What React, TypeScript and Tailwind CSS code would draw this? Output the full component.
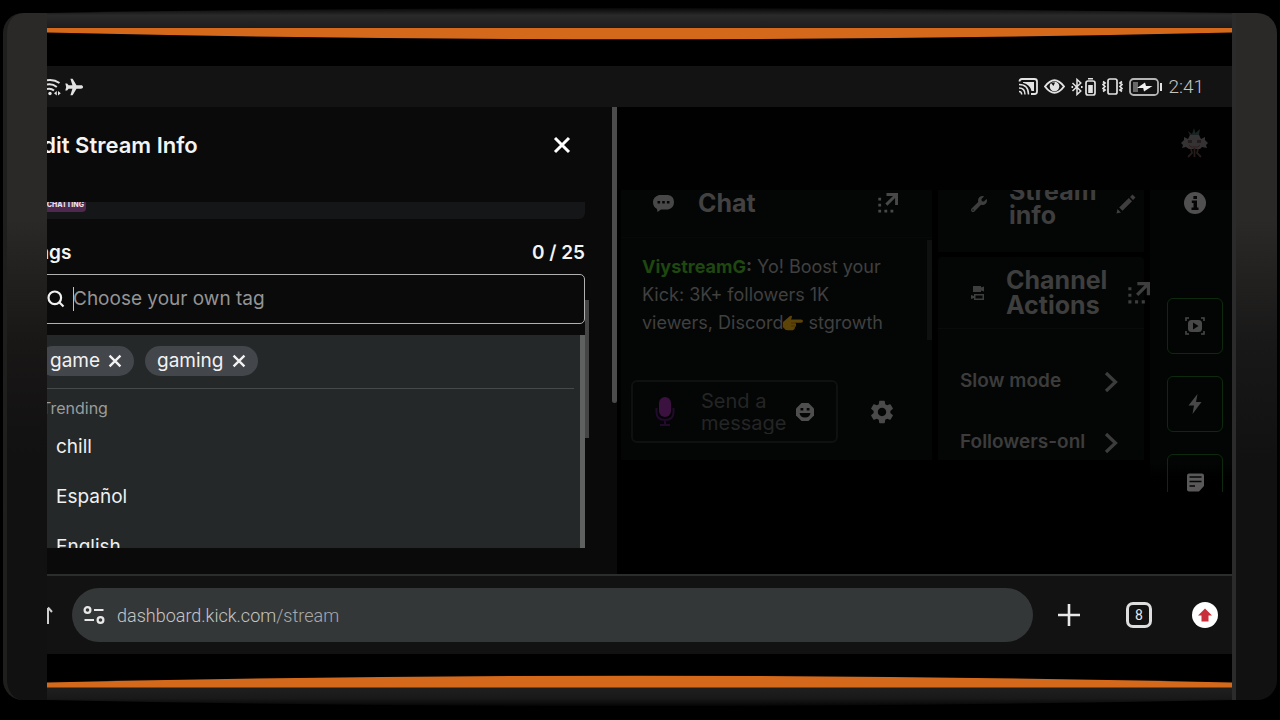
import React from "react";
import { FaWrench } from "react-icons/fa";
import { MdSettings } from "react-icons/md";

type IconProps = { className?: string };

function CloseIcon({ className }: IconProps) {
  return (
    <svg viewBox="0 0 18 18" className={className} aria-hidden="true">
      <path d="M2 2 16 16M16 2 2 16" fill="none" stroke="currentColor" strokeWidth="3" />
    </svg>
  );
}

function PopoutIcon({ className }: IconProps) {
  return (
    <svg viewBox="0 0 20 20" className={className} aria-hidden="true" fill="currentColor">
      <path d="M8.500 0H20v12h-2.900V5L9.400 12.700 7.300 10.600 15 2.900H8.500z" />
      <path d="M.3 4.700h2.800v2.800H.3zM.3 10.700h2.800v2.800H.3zM.3 16.700h2.800v2.800H.3zM6.400 16.700h2.800v2.800H6.400zM12.500 16.700h2.800v2.800h-2.800z" />
    </svg>
  );
}

function ChevronIcon() {
  return (
    <svg viewBox="0 0 14 22" className="h-[22px] w-[14px] shrink-0" aria-hidden="true">
      <path d="M2 2l9.500 9L2 20" fill="none" stroke="currentColor" strokeWidth="3.200" />
    </svg>
  );
}

function TopBezel() {
  return (
    <svg viewBox="0 0 1185 66" preserveAspectRatio="none" className="block h-[66px] w-full shrink-0" aria-hidden="true">
      <defs>
        <linearGradient id="topEdge" x1="0" y1="0" x2="0" y2="1">
          <stop offset="0" stopColor="#080808" />
          <stop offset="0.35" stopColor="#292a29" />
          <stop offset="1" stopColor="#1b1c1b" />
        </linearGradient>
      </defs>
      <path d="M0 13Q592 3 1185 13V29H0z" fill="url(#topEdge)" />
      <path d="M0 28H1185V32.500Q592 46 0 32.500z" fill="#d4691b" />
    </svg>
  );
}

function BottomBezel() {
  return (
    <svg viewBox="0 0 1185 66" preserveAspectRatio="none" className="block h-[66px] w-full shrink-0" aria-hidden="true">
      <defs>
        <linearGradient id="bottomEdge" x1="0" y1="0" x2="0" y2="1">
          <stop offset="0" stopColor="#201f20" />
          <stop offset="0.6" stopColor="#191919" />
          <stop offset="1" stopColor="#050505" />
        </linearGradient>
      </defs>
      <path d="M0 33H1185V46Q592 58 0 46z" fill="url(#bottomEdge)" />
      <path d="M0 28.500Q592 15 1185 28.500V33.500H0z" fill="#d4691b" />
    </svg>
  );
}

function StatusBar() {
  return (
    <div className="flex h-[41px] shrink-0 items-center justify-between bg-[#131313] pr-7 text-[#e2e2e2]">
      <div className="flex items-center gap-1">
        <svg viewBox="0 0 14 18" className="h-[18px] w-[14px]" aria-hidden="true" fill="none" stroke="currentColor" strokeWidth="2">
          <path d="M0 2.200Q7 1 12.500 5M0 6.600Q5.500 5.600 9.800 9M0 11Q4 10 7 12.500" />
          <circle cx="3" cy="15.500" r="1.700" fill="currentColor" stroke="none" />
          <path d="M9.800 13 7 15.300l2.800 2.300zM11 13l2.800 2.300-2.800 2.300z" fill="currentColor" stroke="none" />
        </svg>
        <svg viewBox="0 0 18 18" className="h-[18px] w-[18px]" aria-hidden="true" fill="currentColor">
          <path d="M18 9c0-1.100-.8-1.700-2-1.700h-4.500L7.600.7H5.400l2 6.600H3.600L2.100 5.400H.3L1.200 9 .3 12.600h1.800l1.500-1.900h3.800l-2 6.600h2.200l3.900-6.600H16c1.200 0 2-.6 2-1.700z" />
        </svg>
      </div>
      <div className="flex items-center">
        <svg viewBox="0 0 20 17" className="mr-1.5 h-[17px] w-[20px]" aria-hidden="true" fill="none" stroke="currentColor" strokeWidth="1.800">
          <path d="M1.500 3.500Q1.500 1 4 1h12.500Q19 1 19 3.500v10q0 2.500-2.500 2.500H13" />
          <path d="M5 4h11v9h-2.500Q12 6.500 5 4.800z" fill="currentColor" stroke="none" />
          <path d="M1 6.500q9.500 0 9.500 10M1 10q6 0 6 6.500M1 13.400q2.700 0 2.700 3.100" strokeWidth="1.500" />
        </svg>
        <svg viewBox="0 0 21 15" className="mr-1.5 h-[15px] w-[21px]" aria-hidden="true">
          <path d="M1 7.500Q10.500-5 20 7.500 10.500 20 1 7.500z" fill="none" stroke="currentColor" strokeWidth="2" />
          <circle cx="10.500" cy="7.500" r="4.800" fill="currentColor" />
          <path d="M6.500 3.500h4.500L9.500 7z" fill="#131313" />
        </svg>
        <svg viewBox="0 0 12 18" className="mr-0.5 h-[18px] w-3" aria-hidden="true" fill="none" stroke="currentColor" strokeWidth="1.500">
          <path d="M1.500 5 9.800 13 6 16.500v-15L9.800 5 1.500 13" />
          <path d="M.5 9h1.600M10 9h1.600" strokeWidth="1.800" />
        </svg>
        <svg viewBox="0 0 11 18" className="mr-1.5 h-[18px] w-[11px]" aria-hidden="true">
          <rect x="1" y="3" width="9" height="14" rx="2" fill="none" stroke="currentColor" strokeWidth="1.700" />
          <path d="M3 0h5v1.600H3zM3.200 7h4.600v8H3.200z" fill="currentColor" />
        </svg>
        <svg viewBox="0 0 21 17" className="mr-1.5 h-[17px] w-[21px]" aria-hidden="true" fill="none" stroke="currentColor" strokeWidth="1.700">
          <rect x="6" y="1" width="9" height="15" rx="1.800" />
          <path d="M1 3.500 3 5 1 6.500 3 8.500 1 10.500 3 12 1 13.500M20 3.500 18 5l2 1.500-2 2 2 2-2 1.500 2 1.500" />
        </svg>
        <svg viewBox="0 0 33 18" className="mr-1.5 h-[18px] w-[33px]" aria-hidden="true">
          <rect x="1" y="1" width="28" height="16" rx="3.500" fill="none" stroke="#b4b4b4" strokeWidth="1.800" />
          <path d="M4 4h5v10H4z" fill="#686868" />
          <path d="M16 4.500 17 8h6.500l-8.500 5.500-.8-3.500H8z" fill="#f0f0f0" />
          <path d="M31 5h2v8h-2z" fill="currentColor" />
        </svg>
        <time className="font-['Roboto',sans-serif] text-[19px] leading-6 font-light text-[#c4c4c4]">2:41</time>
      </div>
    </div>
  );
}

function TagChip({ label }: { label: string }) {
  return (
    <span className="flex h-[30px] items-center gap-2 rounded-full bg-[#43464b] px-3 text-[19px] text-[#f2f2f2]">
      {label}
      <button type="button" aria-label={`Remove ${label}`} className="flex">
        <CloseIcon className="h-[14px] w-[14px]" />
      </button>
    </span>
  );
}

const trending = ["chill", "Español", "English"];

function EditDrawer() {
  return (
    <section aria-label="Edit Stream Info" className="relative w-[48.1%] shrink-0 overflow-hidden bg-[#0a0a0a]">
      <div className="-ml-5 flex h-full flex-col pr-8">
        <header className="mb-[19px] flex h-[76px] shrink-0 items-center justify-between pr-[14px] pl-0.5">
          <h1 className="text-[22px] leading-7 font-semibold text-[#f4f4f4]">Edit Stream Info</h1>
          <button type="button" aria-label="Close" className="flex text-white">
            <CloseIcon className="h-[18px] w-[18px]" />
          </button>
        </header>
        <div className="h-[17px] shrink-0 overflow-hidden rounded-b-md bg-[#151617]">
          <div className="flex h-[10px] w-[59px] items-start justify-end overflow-hidden rounded-b-sm bg-[#4f2850] pr-0.5 text-[7px] leading-[6px] font-extrabold text-[#e8e0e8]">
            CHATTING
          </div>
        </div>
        <div className="flex h-[55px] shrink-0 items-center justify-between pt-[14px] text-[19px] font-semibold text-[#f4f4f4]">
          <label htmlFor="tag-search">Tags</label>
          <span>0 / 25</span>
        </div>
        <div className="flex h-[50px] shrink-0 items-center gap-2 rounded-[5px] border border-[#b0b0b0] pl-[19px]">
          <svg viewBox="0 0 18 18" className="h-[18px] w-[18px] shrink-0 text-[#f0f0f0]" aria-hidden="true" fill="none" stroke="currentColor" strokeWidth="2.200">
            <circle cx="7.800" cy="7.800" r="6.300" />
            <path d="M12.500 12.500 16.500 16.500" />
          </svg>
          <div className="flex min-w-0 flex-1 items-center">
            <span className="-mr-px h-6 w-px bg-[#c0c0c0]" />
            <input
              id="tag-search"
              type="text"
              placeholder="Choose your own tag"
              className="w-full bg-transparent text-[19px] text-white outline-none placeholder:text-[#949494]"
            />
          </div>
        </div>
        <div className="relative mt-[11px] mb-[26px] h-[213px] min-h-0 shrink-0 grow overflow-hidden bg-[#242828] px-[11px] pt-[11px]">
          <div className="flex gap-[11px] border-b border-[#454a4a] pb-3">
            <TagChip label="game" />
            <TagChip label="gaming" />
          </div>
          <p className="px-[3px] pt-[7px] text-base leading-6 text-[#9a9d9d]">Trending</p>
          <ul className="mt-[2px]">
            {trending.map((tag) => (
              <li key={tag} className="h-[50px]">
                <button type="button" className="h-full w-full px-[18px] text-left text-[19px] text-[#f0f0f0]">
                  {tag}
                </button>
              </li>
            ))}
          </ul>
          <span className="absolute top-0 right-0 h-full w-[5px] bg-[#5f6161]" />
        </div>
      </div>
      <span className="absolute top-[193px] right-7 h-[138px] w-1 bg-[#454545]" />
      <span className="absolute top-0 right-0 h-[296px] w-[5px] rounded-b-sm bg-[#4c4c4c]" />
    </section>
  );
}

function ChatPanel() {
  return (
    <section aria-label="Chat" className="relative flex h-[270px] min-w-0 flex-1 flex-col bg-[#040605]">
      <header className="flex h-[47px] items-center pr-[34px] pb-[21px] pl-8">
        <svg viewBox="0 0 21 17" className="h-[17px] w-[21px]" aria-hidden="true">
          <path d="M6 0h9q6 1 6 7t-6 7.500H8L4.500 17 4 14Q0 12 0 7T6 0z" fill="#484848" />
          <path d="M4.500 6h2.600v2.600H4.500zM9.200 6h2.600v2.600H9.200zM13.900 6h2.600v2.600h-2.600z" fill="#040605" />
        </svg>
        <h2 className="ml-6 flex-1 text-[25px] leading-8 font-bold text-[#424242]">Chat</h2>
        <button type="button" aria-label="Pop out chat" className="flex text-[#484848]">
          <PopoutIcon className="h-5 w-5" />
        </button>
      </header>
      <p className="border-t border-[#060908] pt-[15px] pr-8 pl-[21px] text-[18px] leading-7 text-[#404040]">
        <b className="font-bold text-[#1f4710]">ViystreamG</b>
        <b className="font-bold">:</b> Yo! Boost your Kick: 3K+ followers 1K viewers, Discord
        <svg viewBox="0 0 20 16" className="inline h-4 w-5 align-[-2px]" role="img" aria-label="pointing right">
          <path d="M0 7 7 1q2-1 2 1L8 4.500h10q2 .2 2 1.600T18 7.800h-5.500q1.500 3-.5 4.500 0 2.500-2 3H5q-3 0-5-3z" fill="#5c4308" />
          <path d="M8 8h5M8 11h4.500" stroke="#3f2c04" strokeWidth="0.800" fill="none" />
        </svg>{" "}
        stgrowth
      </p>
      <div className="mt-auto mb-[17px] flex items-center pl-[10px]">
        <div className="flex h-[63px] w-[207px] items-center rounded-md border-2 border-[#0e1110] pl-[22px]">
          <svg viewBox="0 0 20 30" className="h-[30px] w-5 shrink-0" aria-hidden="true">
            <rect x="4" y="0" width="12" height="20" rx="6" fill="#3b1140" />
            <path d="M1.500 11v4q0 8 8.500 8t8.500-8v-4M10 23v5M5 28h10" fill="none" stroke="#210a2c" strokeWidth="2" />
          </svg>
          <textarea
            aria-label="Send a message"
            placeholder="Send a message"
            rows={2}
            className="ml-[26px] w-[95px] shrink-0 resize-none overflow-hidden bg-transparent text-xl leading-[22px] text-[#404040] outline-none placeholder:text-[#242525]"
          />
          <button type="button" aria-label="Emotes" className="flex shrink-0">
            <svg viewBox="0 0 18 18" className="h-[18px] w-[18px]" aria-hidden="true">
              <path d="M5.500 0h7L18 5.500v7L12.500 18h-7L0 12.500v-7z" fill="#4e4e4e" />
              <path d="M4.500 5h2.800v2.600H4.500zM10.700 5h2.800v2.600h-2.800zM3.500 10h11q-.8 4.500-5.500 4.500T3.500 10z" fill="#040605" />
            </svg>
          </button>
        </div>
        <button type="button" aria-label="Chat settings" className="ml-[30px] text-[#4a4a4a]">
          <MdSettings className="h-7 w-7" />
        </button>
      </div>
      <span className="absolute top-[50px] right-0 h-[100px] w-[5px] bg-[#0f1110]" />
    </section>
  );
}

function ModeRow({ label }: { label: string }) {
  return (
    <button type="button" className="flex h-[61px] w-full items-center justify-between pr-[26px] pl-[22px] text-left text-[19px] font-semibold text-[#3c3c3c]">
      {label}
      <ChevronIcon />
    </button>
  );
}

function ActionsColumn() {
  return (
    <div className="flex h-[270px] w-[206px] shrink-0 flex-col gap-[5px] overflow-y-clip text-[#3e3e3e]">
      <section className="flex h-[62px] shrink-0 items-start overflow-hidden bg-[#040605] pl-[33px]">
        <FaWrench className="mt-1.5 h-4 w-4" aria-hidden="true" />
        <div className="ml-[22px] flex h-[37px] flex-1 items-end">
          <h2 className="text-[25px] leading-6 font-bold">Stream info</h2>
        </div>
        <button type="button" aria-label="Edit stream info" className="mt-1 mr-2 flex">
          <svg viewBox="0 0 20 20" className="h-5 w-5" aria-hidden="true" fill="currentColor">
            <path d="M16.500.5l3 3-2.500 2.500-3-3zM12.800 4l3.200 3.200L6.500 16.800l-3.300-3.300zM1.500 15l3.400 3.500L.5 19.500z" />
          </svg>
        </button>
      </section>
      <section className="flex min-h-0 flex-1 flex-col rounded-t bg-[#040605]">
        <header className="flex h-[72px] shrink-0 items-center border-b border-[#080b0a] pl-[33px]">
          <svg viewBox="0 0 13 14" className="h-[14px] w-[13px] shrink-0" aria-hidden="true" fill="currentColor">
            <path d="M2 0h8v1.500L13 .5v5l-3-1V6H2zM3 8h10v6H3v-2l-3 1V9l3 1z" />
            <path d="M4.500 9.500h7v3h-7z" fill="#040605" />
          </svg>
          <h2 className="ml-[22px] w-[122px] shrink-0 text-[25px] leading-[25px] font-bold">Channel Actions</h2>
          <button type="button" aria-label="Pop out channel actions" className="flex shrink-0">
            <PopoutIcon className="h-[22px] w-[22px]" />
          </button>
        </header>
        <div className="-mb-8 pt-[22px]">
          <ModeRow label="Slow mode" />
          <ModeRow label="Followers-onl" />
        </div>
      </section>
    </div>
  );
}

const railButton = "flex h-14 w-14 shrink-0 items-center justify-center rounded-md border border-[#0d2b0c] text-[#484848]";

function Rail() {
  return (
    <nav aria-label="Panels" className="flex h-[302px] w-[82px] shrink-0 flex-col items-center gap-[22px] overflow-hidden bg-linear-to-b from-[#030504] from-90% to-black pl-2">
      <button type="button" aria-label="Information" className="mt-[2px] mb-[62px] flex shrink-0">
        <svg viewBox="0 0 22 22" className="h-[22px] w-[22px]" aria-hidden="true">
          <circle cx="11" cy="11" r="11" fill="#505050" />
          <path d="M9.400 4h3.600v3H9.400zM7.800 8.500H13v7h1.500V18h-7v-2.500h2V11H7.800z" fill="#050505" />
        </svg>
      </button>
      <button type="button" aria-label="Live preview" className={railButton}>
        <svg viewBox="0 0 20 18" className="h-[18px] w-5" aria-hidden="true">
          <path d="M1 4V1h3M16 1h3v3M19 14v3h-3M4 17H1v-3" fill="none" stroke="currentColor" strokeWidth="1.600" />
          <rect x="3" y="3" width="14" height="12" rx="3.500" fill="currentColor" />
          <path d="M8 5.500 13.500 9 8 12.500z" fill="#040605" />
        </svg>
      </button>
      <button type="button" aria-label="Quick actions" className={railButton}>
        <svg viewBox="0 0 14 20" className="h-5 w-[14px]" aria-hidden="true" fill="currentColor">
          <path d="M9.500 0 .5 11.500H6L4.500 20 13.500 8H8z" />
        </svg>
      </button>
      <button type="button" aria-label="Activity notes" className={railButton}>
        <svg viewBox="0 0 17 19" className="h-[19px] w-[17px]" aria-hidden="true">
          <path d="M2 .5h13q2 0 2 2V13l-5 5.500H2q-2 0-2-2v-14q0-2 2-2z" fill="#5a5858" />
          <path d="M2.500 4h12M2.500 8.500h12M2.500 13H8" stroke="#040605" strokeWidth="1.600" fill="none" />
        </svg>
      </button>
    </nav>
  );
}

function Dashboard() {
  return (
    <div className="flex min-w-0 flex-1 flex-col bg-black">
      <div className="flex h-[83px] shrink-0 items-center justify-end bg-[#010101] pr-6 pb-3">
        <svg viewBox="0 0 27 30" className="h-[30px] w-[27px]" role="img" aria-label="Profile">
          <path d="M13 0l1.500 5L19 1l-1 6h3L9 8 7 3l4 3z" fill="#1a2322" />
          <path d="M3 9l4 2 2-4h9l2 4 4-2v3l3 3-2 2 1 3-5-1-2 2H8l-3-2-4 1 1-3-2-2 3-3z" fill="#353233" />
          <path d="M7 12h4v3H7zM16 12h4v3h-4z" fill="#241d1e" />
          <path d="M8 17l2 2h7l2-2" fill="none" stroke="#301e1e" strokeWidth="1" />
          <path d="M10 21l1 4-4 4M17 21l-1 4 4 4M13.500 20v9" fill="none" stroke="#271c1b" strokeWidth="1.800" />
        </svg>
      </div>
      <div className="flex gap-[6px] pl-1">
        <ChatPanel />
        <ActionsColumn />
        <Rail />
      </div>
    </div>
  );
}

function BrowserBar() {
  return (
    <div className="flex h-[80px] shrink-0 items-center overflow-hidden border-t-2 border-[#2b2c2c] bg-[#121212] pr-[14px] text-[#e8e8e8]">
      <svg viewBox="0 0 6 18" className="h-[18px] w-[6px] shrink-0" aria-hidden="true">
        <path d="M1 18V2M1 1.500 5 6" fill="none" stroke="#cfcfcf" strokeWidth="2" />
      </svg>
      <div className="ml-[19px] flex h-[54px] min-w-0 flex-1 items-center rounded-full bg-[#343738] pl-[11px]">
        <svg viewBox="0 0 22 18" className="h-[18px] w-[22px] shrink-0" aria-hidden="true" fill="none" stroke="currentColor" strokeWidth="2.200">
          <circle cx="4.500" cy="4" r="2.900" />
          <path d="M11 4h9.500M1.500 14H11" />
          <circle cx="17.500" cy="14" r="2.900" />
        </svg>
        <a href="https://dashboard.kick.com/stream" className="ml-3 pt-0.5 font-['Roboto',sans-serif] text-[18px] leading-6 font-light text-[#c4c6c6]">
          dashboard.kick.com<span className="text-[#a8aaaa]">/stream</span>
        </a>
      </div>
      <button type="button" aria-label="New tab" className="ml-[25px] flex shrink-0">
        <svg viewBox="0 0 22 22" className="h-[22px] w-[22px]" aria-hidden="true">
          <path d="M11 0v22M0 11h22" stroke="currentColor" strokeWidth="2.600" />
        </svg>
      </button>
      <button type="button" aria-label="8 open tabs" className="ml-[46px] flex h-[26px] w-[26px] shrink-0 items-center justify-center rounded-[7px] border-[3px] border-[#dedede] font-['Roboto',sans-serif] text-sm leading-none">
        8
      </button>
      <button type="button" aria-label="Update available" className="ml-10 flex shrink-0">
        <svg viewBox="0 0 26 26" className="h-[26px] w-[26px]" aria-hidden="true">
          <circle cx="13" cy="13" r="13" fill="#ffffff" />
          <path d="M13 6.500 20 13.500h-3.500V19.500h-7V13.500H6z" fill="#c92f3a" />
        </svg>
      </button>
    </div>
  );
}

export default function App() {
  return (
    <main className="flex min-h-screen overflow-hidden bg-black px-[3px] font-['Inter',sans-serif]">
      <div className="mt-[13px] mb-5 w-11 shrink-0 rounded-l-[20px] border-l-4 border-[#1f1f1e] bg-linear-to-b from-[#2a2927] from-30% via-[#191616] via-48% to-[#111111] to-65%" />
      <div className="flex min-w-0 flex-1 flex-col">
        <TopBezel />
        <StatusBar />
        <div className="flex min-h-[467px] flex-1">
          <EditDrawer />
          <Dashboard />
        </div>
        <BrowserBar />
        <BottomBezel />
      </div>
      <div className="mt-[13px] mb-5 w-[45px] shrink-0 rounded-r-[20px] border-l-4 border-[#2b2b2b] bg-linear-to-b from-[#2a2927] from-30% via-[#191818] via-48% to-[#111111] to-65%" />
    </main>
  );
}
